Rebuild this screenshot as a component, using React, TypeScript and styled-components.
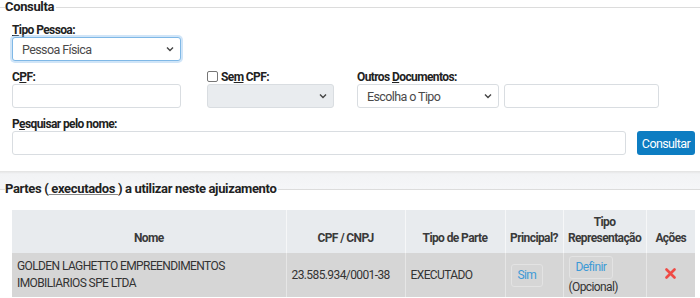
import styled, { createGlobalStyle } from "styled-components";

const GlobalStyle = createGlobalStyle`
  body {
    margin: 0;
    background: #fff;
    font-family: Roboto, "Liberation Sans", sans-serif;
    font-size: 12px;
    letter-spacing: -0.6px;
    color: #333;
  }
  * { box-sizing: border-box; }
`;

const Page = styled.div`
  width: 700px;
  height: 298px;
  overflow: hidden;
`;

const Fieldset = styled.fieldset<{ $top?: number; $bottom?: number }>`
  margin: 0;
  padding: ${(p) => p.$top ?? 7}px 5px ${(p) => p.$bottom ?? 0}px 12px;
  border: 0;
  border-top: 1px solid #dcdcdc;
  min-width: 0;
`;

const Legend = styled.legend`
  margin-left: -7px;
  padding: 0 2px 0 0;
  font-size: 13px;
  font-weight: bold;
  line-height: 14px;
  letter-spacing: -0.35px;
  color: #222;

  u {
    text-decoration-color: #888;
  }
`;

const Section = styled.div`
  padding-top: 11px;
  background: linear-gradient(#e2e2e2 0, #f2f3f5 3px, #f5f6f8 18px, #fff 18px);
`;

const Row = styled.div`
  display: flex;
  align-items: flex-end;
  margin-bottom: 8px;

  &:last-child {
    margin-bottom: 0;
  }
`;

const Group = styled.div<{ $width: number; $gap?: number }>`
  display: flex;
  flex-direction: column;
  width: ${(p) => p.$width}px;
  margin-right: ${(p) => p.$gap ?? 0}px;
`;

const Label = styled.label`
  display: flex;
  align-items: center;
  gap: 3px;
  height: 15px;
  font-weight: bold;
  color: #222;
`;

const Check = styled.span`
  width: 11px;
  height: 11px;
  border: 1px solid #767676;
  border-radius: 2px;
  background: #fff;
`;

const Controls = styled.div`
  display: flex;
  gap: 5px;
`;

const Field = styled.div<{ $width?: number; $focus?: boolean; $disabled?: boolean }>`
  display: flex;
  align-items: center;
  justify-content: space-between;
  height: 24px;
  width: ${(p) => (p.$width ? `${p.$width}px` : "100%")};
  padding: 0 6px 0 9px;
  border: 1px solid ${(p) => (p.$focus ? "#7fb8e6" : "#d9dde1")};
  border-radius: 3px;
  background: ${(p) => (p.$disabled ? "#e9ecef" : "#fff")};
  box-shadow: ${(p) => (p.$focus ? "0 0 0 2px rgba(120, 180, 235, 0.35)" : "none")};
  color: #4a4a4a;
  font-size: 12.5px;
`;

const Chevron = () => (
  <svg width="8" height="6" viewBox="0 0 8 6">
    <path d="M1 1.5 L4 4.5 L7 1.5" fill="none" stroke="#444" strokeWidth="1.4" />
  </svg>
);

const Button = styled.button`
  width: 58px;
  height: 24px;
  margin-left: 11px;
  padding: 0;
  border: 0;
  border-radius: 3px;
  background: #0d7dc2;
  color: #fff;
  font: inherit;
  font-size: 12.5px;
  letter-spacing: -0.6px;
`;

const TableWrap = styled.div`
  padding-top: 7px;
`;

const Table = styled.table`
  width: 683px;
  border-collapse: collapse;
  table-layout: fixed;
`;

const Th = styled.th<{ $width: number }>`
  width: ${(p) => p.$width}px;
  height: 43px;
  padding: 0 2px 7px;
  vertical-align: bottom;
  text-align: center;
  font-weight: bold;
  line-height: 16px;
  color: #3a3a3a;
  background: #e8ebee;
  border-left: 1px solid #f6f7f8;

  &:first-child {
    border-left: 0;
  }
`;

const Td = styled.td<{ $center?: boolean }>`
  height: 44px;
  padding: 0 5px;
  vertical-align: middle;
  text-align: ${(p) => (p.$center ? "center" : "left")};
  line-height: 17px;
  color: #333;
  background: #d6d6d6;
  border-left: 1px solid #e6e6e6;
  white-space: nowrap;

  &:first-child {
    border-left: 0;
  }
`;

const LinkButton = styled.span`
  display: inline-block;
  padding: 3px 6px;
  border: 1px solid #e3e3e3;
  border-radius: 3px;
  color: #3c9ad6;
  line-height: 15px;
`;

const Repr = styled.div`
  display: flex;
  flex-direction: column;
  align-items: flex-start;
  gap: 1px;
  line-height: 15px;
`;

const RemoveIcon = () => (
  <svg width="11" height="11" viewBox="0 0 11 11">
    <path d="M1.5 1.5 L9.5 9.5 M9.5 1.5 L1.5 9.5" stroke="#ef4b45" strokeWidth="2.6" strokeLinecap="round" />
  </svg>
);

export default function App() {
  return (
    <Page>
      <GlobalStyle />
      <Fieldset $top={8} $bottom={16}>
        <Legend>Consulta</Legend>
        <Row>
          <Group $width={169}>
            <Label>
              <span>
                <u>T</u>ipo Pessoa:
              </span>
            </Label>
            <Field $focus>
              Pessoa Física
              <Chevron />
            </Field>
          </Group>
        </Row>
        <Row>
          <Group $width={169} $gap={26}>
            <Label>
              <span>
                C<u>P</u>F:
              </span>
            </Label>
            <Field />
          </Group>
          <Group $width={127} $gap={23}>
            <Label>
              <Check />
              <span>
                Se<u>m</u> CPF:
              </span>
            </Label>
            <Field $disabled>
              <span />
              <Chevron />
            </Field>
          </Group>
          <Group $width={302}>
            <Label>
              <span>
                Outros <u>D</u>ocumentos:
              </span>
            </Label>
            <Controls>
              <Field $width={142}>
                Escolha o Tipo
                <Chevron />
              </Field>
              <Field $width={155} />
            </Controls>
          </Group>
        </Row>
        <Row>
          <Group $width={614}>
            <Label>
              <span>
                P<u>e</u>squisar pelo nome:
              </span>
            </Label>
            <Field />
          </Group>
          <Button>Consultar</Button>
        </Row>
      </Fieldset>
      <Section>
        <Fieldset>
          <Legend>
            Partes (<u> executados </u>) a utilizar neste ajuizamento
          </Legend>
          <TableWrap>
            <Table>
              <thead>
                <tr>
                  <Th $width={274}>Nome</Th>
                  <Th $width={119}>CPF / CNPJ</Th>
                  <Th $width={100}>Tipo de Parte</Th>
                  <Th $width={58}>Principal?</Th>
                  <Th $width={83}>Tipo Representação</Th>
                  <Th $width={49}>Ações</Th>
                </tr>
              </thead>
              <tbody>
                <tr>
                  <Td>
                    GOLDEN LAGHETTO EMPREENDIMENTOS
                    <br />
                    IMOBILIARIOS SPE LTDA
                  </Td>
                  <Td>23.585.934/0001-38</Td>
                  <Td>EXECUTADO</Td>
                  <Td>
                    <LinkButton>Sim</LinkButton>
                  </Td>
                  <Td>
                    <Repr>
                      <LinkButton>Definir</LinkButton>
                      <span>(Opcional)</span>
                    </Repr>
                  </Td>
                  <Td $center>
                    <RemoveIcon />
                  </Td>
                </tr>
              </tbody>
            </Table>
          </TableWrap>
        </Fieldset>
      </Section>
    </Page>
  );
}
